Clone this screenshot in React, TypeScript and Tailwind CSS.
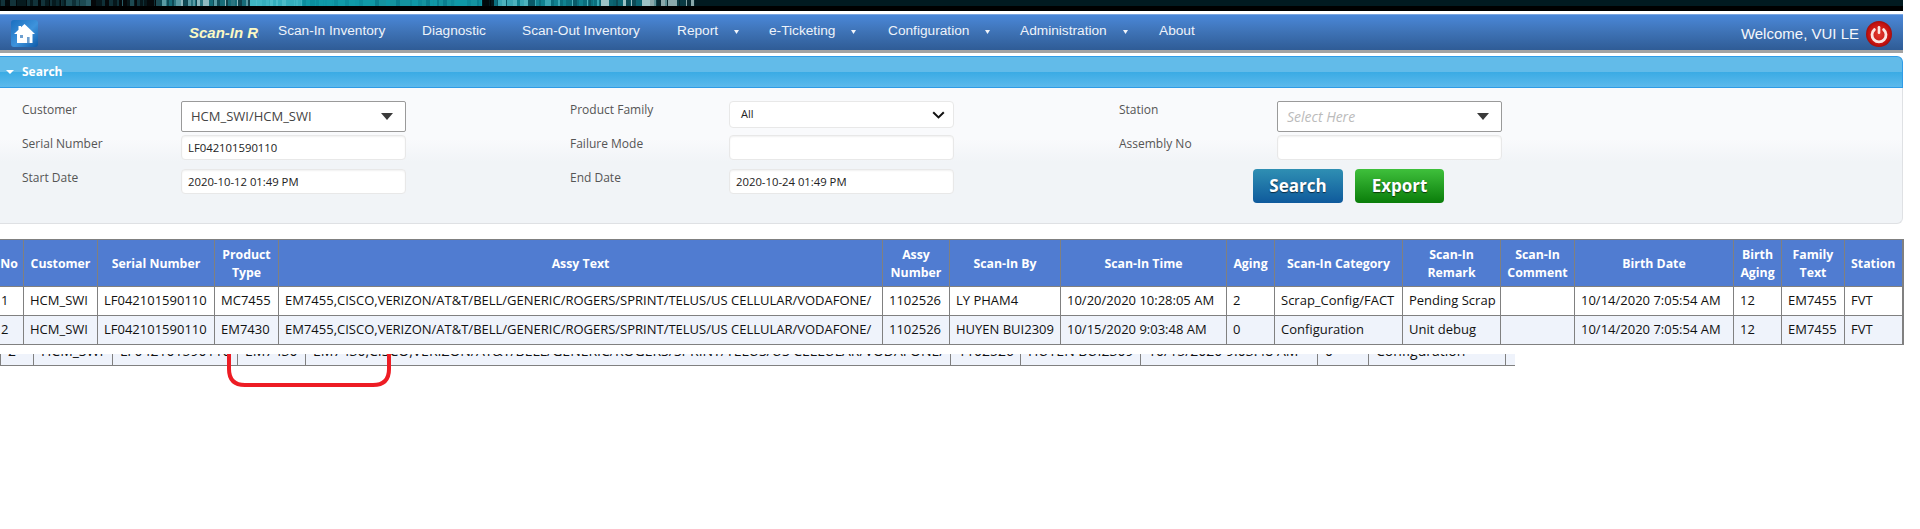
import React from "react";

const font = { os: "font-['Open_Sans',sans-serif]" };

function Strip() {
  const rects: React.ReactNode[] = [];
  let seed = 17;
  const rnd = () => {
    seed = (seed * 16807) % 2147483647;
    return seed / 2147483647;
  };
  const stops: [number, number, string[]][] = [
    [0, 66, ["#061a1e", "#0b2a30", "#02090b", "#12333a"]],
    [66, 160, ["#05080a", "#0f3037", "#1d4a52", "#06161a", "#2a5c66"]],
    [160, 250, ["#10424c", "#2c7580", "#5a9aa3", "#0f4a55", "#8fb9bf", "#176c78"]],
    [250, 302, ["#3fb6c4", "#35aebd", "#4bbcc9"]],
    [302, 370, ["#0e97a6", "#0c8e9e", "#109aa8"]],
    [370, 482, ["#0d8b9a", "#14939f", "#0a7f8f", "#0f98a6"]],
    [482, 494, ["#03181c", "#01090b"]],
    [494, 600, ["#3aa6b3", "#0c6f7e", "#11818f", "#0a5a68", "#4db2bd"]],
    [600, 650, ["#0a5f6c", "#0c4a55", "#9cc2c5", "#0d6572"]],
    [650, 695, ["#0a3a43", "#5d8f94", "#07282f", "#8aa8aa"]],
  ];
  for (const [a, b, cols] of stops) {
    let x = a;
    while (x < b) {
      const w = Math.min(b - x, 1 + Math.floor(rnd() * 4));
      rects.push(<rect key={x} x={x} y={0} width={w} height={6} fill={cols[Math.floor(rnd() * cols.length)]} />);
      x += w;
    }
  }
  return (
    <svg width="1903" height="6" className="block">
      <rect x="0" y="0" width="1903" height="6" fill="#011a20" />
      {rects}
    </svg>
  );
}

function HomeIcon() {
  return (
    <svg width="27" height="27" viewBox="0 0 27 27" className="block">
      <defs>
        <linearGradient id="hb" x1="0" y1="0" x2="1" y2="1">
          <stop offset="0" stopColor="#1a6fc0" />
          <stop offset="0.55" stopColor="#3e93dc" />
          <stop offset="1" stopColor="#0d5aa8" />
        </linearGradient>
      </defs>
      <rect x="0" y="0" width="27" height="27" rx="3" fill="url(#hb)" />
      <path d="M13.5 4 L24 14 L21.5 14 L21.5 23 L6 23 L6 14 L3 14 L7.5 9.7 L7.5 6 L10 6 L10 7.3 Z" fill="#ffffff" />
      <rect x="9" y="15" width="3" height="3" fill="#6d9fd0" />
      <rect x="16" y="17" width="2.6" height="6" fill="#6d9fd0" />
    </svg>
  );
}

function PowerIcon() {
  return (
    <svg width="26" height="26" viewBox="0 0 26 26" className="block">
      <defs>
        <radialGradient id="pb" cx="0.5" cy="0.5" r="0.55">
          <stop offset="0" stopColor="#e23a30" />
          <stop offset="0.75" stopColor="#c4120f" />
          <stop offset="1" stopColor="#8c0b0b" />
        </radialGradient>
      </defs>
      <circle cx="13" cy="13" r="13" fill="url(#pb)" />
      <path d="M8.4 8.6 A7 7 0 1 0 17.6 8.6" fill="none" stroke="#fbe6e2" strokeWidth="2.8" strokeLinecap="round" />
      <rect x="11.7" y="5" width="2.6" height="8" rx="1.2" fill="#fbe6e2" />
    </svg>
  );
}

function Caret() {
  return (
    <svg width="5" height="4" viewBox="0 0 5 4" className="block ml-[16px] mt-[1px]">
      <path d="M0 0 L5 0 L2.5 4 Z" fill="#f1f5fb" />
    </svg>
  );
}

const navItems: { t: string; w: string; c?: boolean }[] = [
  { t: "Scan-In Inventory", w: "w-[144px]" },
  { t: "Diagnostic", w: "w-[100px]" },
  { t: "Scan-Out Inventory", w: "w-[155px]" },
  { t: "Report", w: "w-[92px]", c: true },
  { t: "e-Ticketing", w: "w-[119px]", c: true },
  { t: "Configuration", w: "w-[132px]", c: true },
  { t: "Administration", w: "w-[139px]", c: true },
  { t: "About", w: "w-[60px]" },
];

function Nav() {
  return (
    <div className="h-[36px] border-t border-[#7aa6e2] bg-[linear-gradient(#4a87d8,#3f74b8_45%,#2f5c96)] flex items-center font-['Liberation_Sans',sans-serif]">
      <div className="ml-[11px] mt-[2px]">
        <HomeIcon />
      </div>
      <div className="ml-[151px] w-[70px] overflow-hidden whitespace-nowrap text-[15px] font-bold italic text-[#fbf9c4] mt-[1px]">
        Scan-In Reconciliation
      </div>
      <div className="ml-[19px] flex items-center text-[13.7px] text-[#eef3fa] -mt-[2px]">
        {navItems.map((n) => (
          <div key={n.t} className={`${n.w} flex items-center whitespace-nowrap`}>
            <span>{n.t}</span>
            {n.c ? <Caret /> : null}
          </div>
        ))}
      </div>
      <div className="ml-auto mr-[11px] flex items-center gap-[7px] mt-[3px]">
        <span className="text-[15px] text-[#f4f7fb]">Welcome, VUI LE</span>
        <PowerIcon />
      </div>
    </div>
  );
}

function DarkArrow() {
  return (
    <svg width="12" height="7" viewBox="0 0 12 7" className="block">
      <path d="M0 0 L12 0 L6 7 Z" fill="#3a3a3a" />
    </svg>
  );
}

const labelCls = "text-[12px] leading-[18px] text-[#555555] whitespace-nowrap";
const inputCls =
  "w-[225px] h-[25px] rounded-[4px] border border-[#e8e8e8] bg-white shadow-[inset_0_1px_2px_rgba(0,0,0,0.06)] pl-[6px] text-[11.3px] leading-[23px] text-[#222222] whitespace-nowrap";
const bigSelect =
  "w-[225px] h-[31px] rounded-[2px] border border-[#9a9a9a] bg-white flex items-center justify-between pl-[9px] pr-[12px]";

function SearchPanel() {
  return (
    <div className={`mt-[3px] ${font.os}`}>
      <div className="h-[32px] rounded-tr-[6px] border-y border-r border-[#2f9be6] bg-[linear-gradient(#62bbe9_0,#62bbe9_50%,#3aabe4_50%,#5cb9ec_100%)] flex items-center pl-[6px]">
        <svg width="8" height="4" viewBox="0 0 8 4" className="block">
          <path d="M0 0 L8 0 L4 4 Z" fill="#ffffff" />
        </svg>
        <span className="ml-[8px] text-[12px] font-bold text-white">Search</span>
      </div>
      <div className="h-[136px] rounded-br-[6px] border-b border-r border-[#dfe1e4] bg-[linear-gradient(#f9fafc_0,#f9fafc_38%,#f1f4f7_55%,#f1f4f7_100%)] pt-[13px] pl-[22px]">
        <div className="grid grid-cols-[159px_225px_164px_159px_225px_165px_158px_225px] auto-rows-[34px]">
          <div className={labelCls}>Customer</div>
          <div className={bigSelect}>
            <span className="text-[13px] text-[#444444]">HCM_SWI/HCM_SWI</span>
            <DarkArrow />
          </div>
          <div />
          <div className={labelCls}>Product Family</div>
          <div className="w-[225px] h-[27px] rounded-[4px] border border-[#e8e8e8] bg-white flex items-center justify-between pl-[11px] pr-[8px]">
            <span className="text-[11px] text-[#222222]">All</span>
            <svg width="13" height="8" viewBox="0 0 13 8" className="block">
              <path d="M1.2 1.2 L6.5 6.4 L11.8 1.2" fill="none" stroke="#111111" strokeWidth="2" />
            </svg>
          </div>
          <div />
          <div className={labelCls}>Station</div>
          <div className={bigSelect}>
            <span className="text-[14px] italic text-[#bbbbbb]">Select Here</span>
            <DarkArrow />
          </div>

          <div className={labelCls}>Serial Number</div>
          <div className={inputCls}>LF042101590110</div>
          <div />
          <div className={labelCls}>Failure Mode</div>
          <div className={inputCls} />
          <div />
          <div className={labelCls}>Assembly No</div>
          <div className={inputCls} />

          <div className={labelCls}>Start Date</div>
          <div className={inputCls}>2020-10-12 01:49 PM</div>
          <div />
          <div className={labelCls}>End Date</div>
          <div className={inputCls}>2020-10-24 01:49 PM</div>
          <div />
          <div className="col-span-2 pl-[134px] flex gap-[12px]">
            <div className="w-[90px] h-[34px] rounded-[4px] bg-[linear-gradient(#2f8fb3,#0f5a9c)] flex items-center justify-center text-[17px] font-bold text-white [text-shadow:0_1px_1px_rgba(0,0,0,0.6)]">
              Search
            </div>
            <div className="w-[89px] h-[34px] rounded-[4px] bg-[linear-gradient(#3fc03c,#0a7d0a)] flex items-center justify-center text-[17px] font-bold text-white [text-shadow:0_1px_1px_rgba(0,0,0,0.6)]">
              Export
            </div>
          </div>
        </div>
      </div>
    </div>
  );
}

const colW = [29, 74, 117, 64, 604, 67, 111, 166, 48, 128, 98, 74, 159, 48, 63, 58];

const heads = [
  "No",
  "Customer",
  "Serial Number",
  "Product Type",
  "Assy Text",
  "Assy Number",
  "Scan-In By",
  "Scan-In Time",
  "Aging",
  "Scan-In Category",
  "Scan-In Remark",
  "Scan-In Comment",
  "Birth Date",
  "Birth Aging",
  "Family Text",
  "Station",
];

const ASSY = "EM7455,CISCO,VERIZON/AT&T/BELL/GENERIC/ROGERS/SPRINT/TELUS/US CELLULAR/VODAFONE/";

const rows = [
  ["1", "HCM_SWI", "LF042101590110", "MC7455", ASSY, "1102526", "LY PHAM4", "10/20/2020 10:28:05 AM", "2", "Scrap_Config/FACT", "Pending Scrap", "", "10/14/2020 7:05:54 AM", "12", "EM7455", "FVT"],
  ["2", "HCM_SWI", "LF042101590110", "EM7430", ASSY, "1102526", "HUYEN BUI2309", "10/15/2020 9:03:48 AM", "0", "Configuration", "Unit debug", "", "10/14/2020 7:05:54 AM", "12", "EM7455", "FVT"],
];

function MainTable() {
  return (
    <div className={`mt-[15px] ${font.os}`}>
      <table className="table-fixed border-collapse w-[1909px] ml-[-6px] border-r-2 border-[#808080]">
        <colgroup>
          {colW.map((w, i) => (
            <col key={i} style={{ width: w }} />
          ))}
        </colgroup>
        <thead>
          <tr className="h-[47px] bg-[#507cd1]">
            {heads.map((h) => (
              <th key={h} className="border border-[#808080] px-[4px] pt-[1px] text-center text-[12.3px] leading-[18px] font-bold text-white">
                {h}
              </th>
            ))}
          </tr>
        </thead>
        <tbody>
          {rows.map((r, i) => (
            <tr key={i} className={`h-[29px] ${i === 1 ? "bg-[#eff3fb]" : "bg-white"}`}>
              {r.map((c, j) => (
                <td key={j} className="border border-[#808080] pl-[6px] pr-0 text-[13px] text-[#111111] whitespace-nowrap overflow-hidden">
                  {c}
                </td>
              ))}
            </tr>
          ))}
        </tbody>
      </table>
    </div>
  );
}

const remW = [33, 79, 125, 68, 645, 70, 120, 177, 51, 137, 10];
const remRow = ["2", "HCM_SWI", "LF042101590110", "EM7430", "EM7430,CISCO,VERIZON/AT&T/BELL/GENERIC/ROGERS/SPRINT/TELUS/US CELLULAR/VODAFONE/", "1102526", "HUYEN BUI2309", "10/15/2020 9:03:48 AM", "0", "Configuration", ""];

function ClippedTable() {
  return (
    <div className={`relative mt-[9px] h-[33px] ${font.os}`}>
      <div className="h-[12px] w-[1515px] overflow-hidden border-b border-[#808080]">
        <table className="table-fixed border-collapse w-[1515px] mt-[-20px]">
          <colgroup>
            {remW.map((w, i) => (
              <col key={i} style={{ width: w }} />
            ))}
          </colgroup>
          <tbody>
            <tr className="h-[33px] bg-[#eff3fb]">
              {remRow.map((c, j) => (
                <td key={j} className="border-x border-[#808080] pl-[7px] pr-0 text-[14px] text-[#111111] whitespace-nowrap overflow-hidden">
                  {c}
                </td>
              ))}
            </tr>
          </tbody>
        </table>
      </div>
      <svg width="164" height="33" viewBox="0 0 164 33" className="absolute left-[227px] top-0">
        <path d="M2 0 L2 15 Q2 31 18 31 L146 31 Q162 31 162 15 L162 0" fill="none" stroke="#ed1c24" strokeWidth="4" />
      </svg>
    </div>
  );
}

export default function App() {
  return (
    <div className="w-[1903px] min-h-[529px] bg-white">
      <Strip />
      <div className="h-[5px] bg-black" />
      <div className="h-[3px] bg-white" />
      <Nav />
      <div className="h-[3px] bg-[#a3a3a3]" />
      <SearchPanel />
      <MainTable />
      <ClippedTable />
    </div>
  );
}
